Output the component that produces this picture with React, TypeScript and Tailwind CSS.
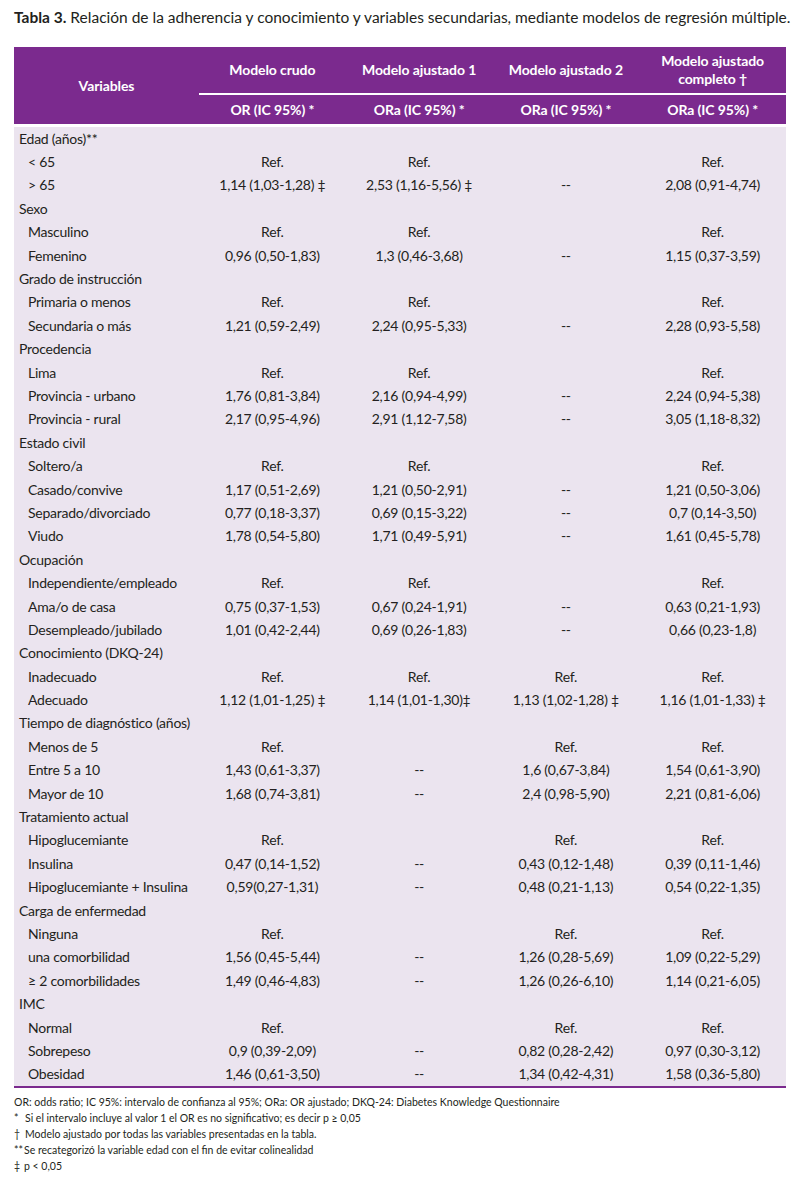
import React from "react";

type Row = { label: string; sub?: boolean; c?: [string, string, string, string] };

const R = "Ref.";
const D = "--";

const rows: Row[] = [
  { label: "Edad (años)**" },
  { label: "< 65", sub: true, c: [R, R, "", R] },
  { label: "> 65", sub: true, c: ["1,14 (1,03-1,28) ‡", "2,53 (1,16-5,56) ‡", D, "2,08 (0,91-4,74)"] },
  { label: "Sexo" },
  { label: "Masculino", sub: true, c: [R, R, "", R] },
  { label: "Femenino", sub: true, c: ["0,96 (0,50-1,83)", "1,3 (0,46-3,68)", D, "1,15 (0,37-3,59)"] },
  { label: "Grado de instrucción" },
  { label: "Primaria o menos", sub: true, c: [R, R, "", R] },
  { label: "Secundaria o más", sub: true, c: ["1,21 (0,59-2,49)", "2,24 (0,95-5,33)", D, "2,28 (0,93-5,58)"] },
  { label: "Procedencia" },
  { label: "Lima", sub: true, c: [R, R, "", R] },
  { label: "Provincia - urbano", sub: true, c: ["1,76 (0,81-3,84)", "2,16 (0,94-4,99)", D, "2,24 (0,94-5,38)"] },
  { label: "Provincia - rural", sub: true, c: ["2,17 (0,95-4,96)", "2,91 (1,12-7,58)", D, "3,05 (1,18-8,32)"] },
  { label: "Estado civil" },
  { label: "Soltero/a", sub: true, c: [R, R, "", R] },
  { label: "Casado/convive", sub: true, c: ["1,17 (0,51-2,69)", "1,21 (0,50-2,91)", D, "1,21 (0,50-3,06)"] },
  { label: "Separado/divorciado", sub: true, c: ["0,77 (0,18-3,37)", "0,69 (0,15-3,22)", D, "0,7 (0,14-3,50)"] },
  { label: "Viudo", sub: true, c: ["1,78 (0,54-5,80)", "1,71 (0,49-5,91)", D, "1,61 (0,45-5,78)"] },
  { label: "Ocupación" },
  { label: "Independiente/empleado", sub: true, c: [R, R, "", R] },
  { label: "Ama/o de casa", sub: true, c: ["0,75 (0,37-1,53)", "0,67 (0,24-1,91)", D, "0,63 (0,21-1,93)"] },
  { label: "Desempleado/jubilado", sub: true, c: ["1,01 (0,42-2,44)", "0,69 (0,26-1,83)", D, "0,66 (0,23-1,8)"] },
  { label: "Conocimiento (DKQ-24)" },
  { label: "Inadecuado", sub: true, c: [R, R, R, R] },
  { label: "Adecuado", sub: true, c: ["1,12 (1,01-1,25) ‡", "1,14 (1,01-1,30)‡", "1,13 (1,02-1,28) ‡", "1,16 (1,01-1,33) ‡"] },
  { label: "Tiempo de diagnóstico (años)" },
  { label: "Menos de 5", sub: true, c: [R, "", R, R] },
  { label: "Entre 5 a 10", sub: true, c: ["1,43 (0,61-3,37)", D, "1,6 (0,67-3,84)", "1,54 (0,61-3,90)"] },
  { label: "Mayor de 10", sub: true, c: ["1,68 (0,74-3,81)", D, "2,4 (0,98-5,90)", "2,21 (0,81-6,06)"] },
  { label: "Tratamiento actual" },
  { label: "Hipoglucemiante", sub: true, c: [R, "", R, R] },
  { label: "Insulina", sub: true, c: ["0,47 (0,14-1,52)", D, "0,43 (0,12-1,48)", "0,39 (0,11-1,46)"] },
  { label: "Hipoglucemiante + Insulina", sub: true, c: ["0,59(0,27-1,31)", D, "0,48 (0,21-1,13)", "0,54 (0,22-1,35)"] },
  { label: "Carga de enfermedad" },
  { label: "Ninguna", sub: true, c: [R, "", R, R] },
  { label: "una comorbilidad", sub: true, c: ["1,56 (0,45-5,44)", D, "1,26 (0,28-5,69)", "1,09 (0,22-5,29)"] },
  { label: "≥ 2 comorbilidades", sub: true, c: ["1,49 (0,46-4,83)", D, "1,26 (0,26-6,10)", "1,14 (0,21-6,05)"] },
  { label: "IMC" },
  { label: "Normal", sub: true, c: [R, "", R, R] },
  { label: "Sobrepeso", sub: true, c: ["0,9 (0,39-2,09)", D, "0,82 (0,28-2,42)", "0,97 (0,30-3,12)"] },
  { label: "Obesidad", sub: true, c: ["1,46 (0,61-3,50)", D, "1,34 (0,42-4,31)", "1,58 (0,36-5,80)"] },
];

export default function App() {
  return (
    <div
      className="w-[809px] min-h-[1179px] bg-white text-[#231f20]"
      style={{ fontFamily: "Lato, 'Open Sans', sans-serif" }}
    >
      <div className="px-[14px] pt-[8px]">
        <p className="text-[15.5px] leading-[18px] whitespace-nowrap">
          <span className="font-bold">Tabla 3.</span> Relación de la adherencia y conocimiento y variables secundarias, mediante modelos de regresión múltiple.
        </p>
      </div>

      <div className="mx-[14px] mt-[21px] w-[772px]">
        <div className="grid grid-cols-[185px_repeat(4,1fr)] bg-[#7b2a8e] text-white font-bold text-[14px] leading-[18px] tracking-[-0.1px]">
          <div className="row-span-2 flex items-center justify-center">Variables</div>
          <div className="h-[46px] flex items-center justify-center text-center">Modelo crudo</div>
          <div className="h-[46px] flex items-center justify-center text-center">Modelo ajustado 1</div>
          <div className="h-[46px] flex items-center justify-center text-center">Modelo ajustado 2</div>
          <div className="h-[46px] flex items-center justify-center text-center">
            Modelo ajustado
            <br />
            completo †
          </div>
          {["OR (IC 95%) *", "ORa (IC 95%) *", "ORa (IC 95%) *", "ORa (IC 95%) *"].map((t, i) => (
            <div
              key={i}
              className="h-[31px] border-t-[2.5px] border-white flex items-center justify-center"
            >
              {t}
            </div>
          ))}
        </div>

        <div className="mt-[3px] bg-[#ebe4ef] border-b-2 border-[#7b2a8e] text-[14px] tracking-[-0.25px]">
          {rows.map((r, i) => (
            <div key={i} className="grid grid-cols-[185px_repeat(4,1fr)] h-[23.4px] items-center leading-[18px]">
              <div className={r.sub ? "pl-[14px] whitespace-nowrap" : "pl-[5px] whitespace-nowrap"}>{r.label}</div>
              {r.c
                ? r.c.map((v, j) => (
                    <div key={j} className="text-center whitespace-nowrap">
                      {v}
                    </div>
                  ))
                : null}
            </div>
          ))}
        </div>

        <div className="mt-[6px] text-[10.5px] leading-[16px]">
          <div>OR: odds ratio; IC 95%: intervalo de confianza al 95%; ORa: OR ajustado; DKQ-24: Diabetes Knowledge Questionnaire</div>
          <div className="flex">
            <span className="w-[11px]">*</span>
            <span>Si el intervalo incluye al valor 1 el OR es no significativo; es decir p ≥ 0,05</span>
          </div>
          <div className="flex">
            <span className="w-[11px]">†</span>
            <span>Modelo ajustado por todas las variables presentadas en la tabla.</span>
          </div>
          <div className="flex">
            <span className="w-[10px]">**</span>
            <span>Se recategorizó la variable edad con el fin de evitar colinealidad</span>
          </div>
          <div className="flex">
            <span className="w-[10px]">‡</span>
            <span>p &lt; 0,05</span>
          </div>
        </div>
      </div>
    </div>
  );
}
